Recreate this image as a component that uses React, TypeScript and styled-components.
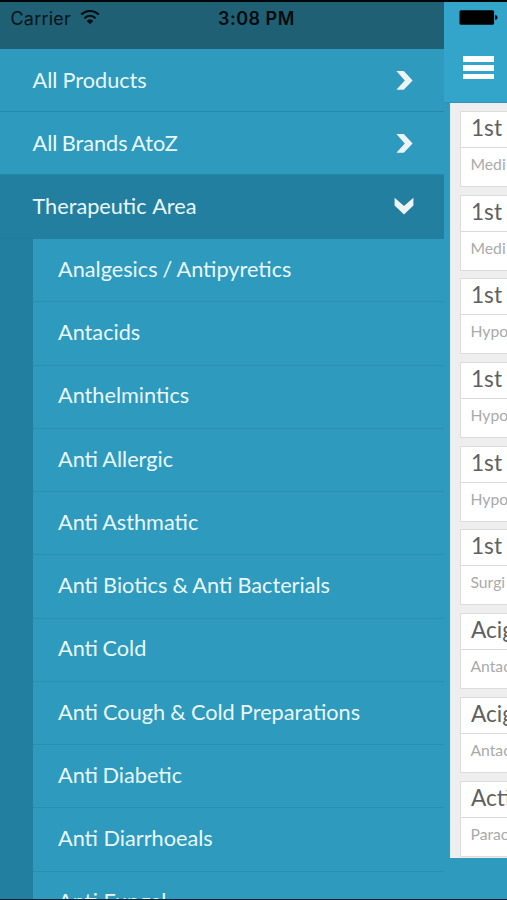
import React from "react";
import styled, { createGlobalStyle } from "styled-components";

const GlobalStyle = createGlobalStyle`
  *, *::before, *::after { box-sizing: border-box; }
  html, body { margin: 0; padding: 0; background: #000; overflow: hidden; }
`;

const Screen = styled.div`
  display: flex;
  width: 507px;
  height: 900px;
  overflow: hidden;
  border-top: 2px solid #020608;
  border-bottom: 1px solid #06222d;
  background: #2d9abe;
  font-family: Lato, "Noto Sans", sans-serif;
`;

const Drawer = styled.nav`
  display: flex;
  flex-direction: column;
  flex: 0 0 444px;
  overflow: hidden;
`;

const StatusBar = styled.div`
  display: flex;
  align-items: flex-start;
  flex: 0 0 47px;
  padding: 5px 0 0 10.5px;
  background: #1f6074;
  color: #06141a;
  font-family: Inter, "Liberation Sans", sans-serif;
  font-size: 18px;
  line-height: 24px;
`;

const Carrier = styled.span`
  width: 69.5px;
  letter-spacing: 0.2px;
  white-space: nowrap;
`;

const Clock = styled.span`
  margin-left: 118px;
  color: #030b0e;
  font-weight: 600;
  letter-spacing: 0.5px;
  white-space: nowrap;
`;

const MenuRow = styled.div<{ $open?: boolean }>`
  display: flex;
  align-items: center;
  justify-content: space-between;
  flex: 0 0 ${(p) => (p.$open ? 64 : 63)}px;
  padding: 0 30px 1px 32.5px;
  border-bottom: 1px solid ${(p) => (p.$open ? "#217d9d" : "#2589ab")};
  background: ${(p) => (p.$open ? "#237f9f" : "#2d9abe")};
`;

const SubList = styled.div`
  flex: 1 0 0;
  overflow: hidden;
  border-left: 33px solid #237f9f;
`;

const SubRow = styled.div`
  display: flex;
  align-items: center;
  height: 63.25px;
  padding: 0 0 2.5px 25px;
  border-bottom: 1px solid #2990b3;
`;

const Label = styled.span<{ $gap?: number }>`
  color: #e9f8fd;
  font-size: 21.7px;
  line-height: 28px;
  word-spacing: ${(p) => p.$gap ?? 0}px;
  white-space: nowrap;
`;

const Main = styled.main`
  display: flex;
  flex-direction: column;
  flex: 1 0 63px;
  overflow: hidden;
`;

const Header = styled.header`
  display: flex;
  flex-direction: column;
  flex: 0 0 101px;
  padding: 8px 0 0 15px;
  border-bottom: 1px solid #2b94b8;
  background: #34a5ca;
`;

const MenuButton = styled.button`
  display: flex;
  flex-direction: column;
  gap: 3px;
  width: 31px;
  margin: 31px 0 0 4px;
  padding: 0;
  border: 0;
  background: none;
`;

const Bar = styled.span`
  height: 5.8px;
  background: #fff;
`;

const Results = styled.section`
  display: flex;
  flex-direction: column;
  gap: 7.7px;
  height: 755px;
  margin-left: 6px;
  padding: 8px 0 0 9px;
  overflow: hidden;
  border-left: 1px solid #d9eff6;
  background: #eeeeee;
`;

const Card = styled.article`
  flex: 0 0 76px;
  width: 120px;
  border: 1px solid #dcdcdc;
  background: #fff;
`;

const CardTitle = styled.h2`
  height: 36px;
  margin: 0;
  padding-left: 10px;
  border-bottom: 1px solid #dadada;
  color: #606060;
  font-size: 22.6px;
  font-weight: 400;
  line-height: 31px;
  white-space: nowrap;
`;

const CardText = styled.p`
  margin: 0;
  padding-left: 9.5px;
  color: #aaa;
  font-size: 15.7px;
  line-height: 32px;
  white-space: nowrap;
`;

const WifiIcon = () => (
  <svg width="20" height="18" viewBox="0 0 20 18" fill="none" stroke="#030b0e">
    <path d="M1.2 7.6C6.3 2.7 13.7 2.7 18.8 7.6" strokeWidth="2.1" />
    <path d="M4.4 11.2C7.8 8.1 12.2 8.1 15.6 11.2" strokeWidth="2.1" />
    <path d="M10 17.2 6.8 13.9Q10 11.1 13.2 13.9Z" fill="#030b0e" stroke="none" />
  </svg>
);

const BatteryIcon = () => (
  <svg width="40" height="15" viewBox="0 0 40 15" fill="#000">
    <rect x="0.5" y="0.2" width="34.6" height="14.6" rx="1.6" />
    <path d="M36.2 5Q38.6 5.3 38.6 7.5T36.2 10Z" />
  </svg>
);

const Chevron = ({ down = false }: { down?: boolean }) =>
  down ? (
    <svg width="20" height="18" viewBox="0 0 20 18" fill="#eef4f6">
      <path d="M0.6 0.8 10 9 19.4 0.8V8.6L10 17.4 0.6 8.6Z" />
    </svg>
  ) : (
    <svg width="18" height="20" viewBox="0 0 18 20" fill="#eef4f6">
      <path d="M0.4 1H7.8L16.6 10.4 7.8 19.8H0.4L8.8 10.4Z" />
    </svg>
  );

const areas: [string, number][] = [
  ["Analgesics / Antipyretics", -0.6],
  ["Antacids", 0],
  ["Anthelmintics", 0],
  ["Anti Allergic", -0.5],
  ["Anti Asthmatic", -0.6],
  ["Anti Biotics & Anti Bacterials", -0.4],
  ["Anti Cold", -1],
  ["Anti Cough & Cold Preparations", -0.4],
  ["Anti Diabetic", -1],
  ["Anti Diarrhoeals", 0],
  ["Anti Fungal", 0],
];

const products = [
  ["1st", "Medi"],
  ["1st", "Medi"],
  ["1st", "Hypo"],
  ["1st", "Hypo"],
  ["1st", "Hypo"],
  ["1st", "Surgi"],
  ["Acig", "Antac"],
  ["Acig", "Antac"],
  ["Acti", "Parac"],
];

export default function App() {
  return (
    <>
      <GlobalStyle />
      <Screen>
        <Drawer>
          <StatusBar>
            <Carrier>Carrier</Carrier>
            <WifiIcon />
            <Clock>3:08 PM</Clock>
          </StatusBar>
          <MenuRow>
            <Label $gap={-0.5}>All Products</Label>
            <Chevron />
          </MenuRow>
          <MenuRow>
            <Label $gap={-1.2}>All Brands AtoZ</Label>
            <Chevron />
          </MenuRow>
          <MenuRow $open>
            <Label $gap={0.8}>Therapeutic Area</Label>
            <Chevron down />
          </MenuRow>
          <SubList>
            {areas.map(([name, gap]) => (
              <SubRow key={name}>
                <Label $gap={gap}>{name}</Label>
              </SubRow>
            ))}
          </SubList>
        </Drawer>
        <Main>
          <Header>
            <BatteryIcon />
            <MenuButton aria-label="Menu">
              <Bar />
              <Bar />
              <Bar />
            </MenuButton>
          </Header>
          <Results>
            {products.map(([name, kind], i) => (
              <Card key={i}>
                <CardTitle>{name}</CardTitle>
                <CardText>{kind}</CardText>
              </Card>
            ))}
          </Results>
        </Main>
      </Screen>
    </>
  );
}
